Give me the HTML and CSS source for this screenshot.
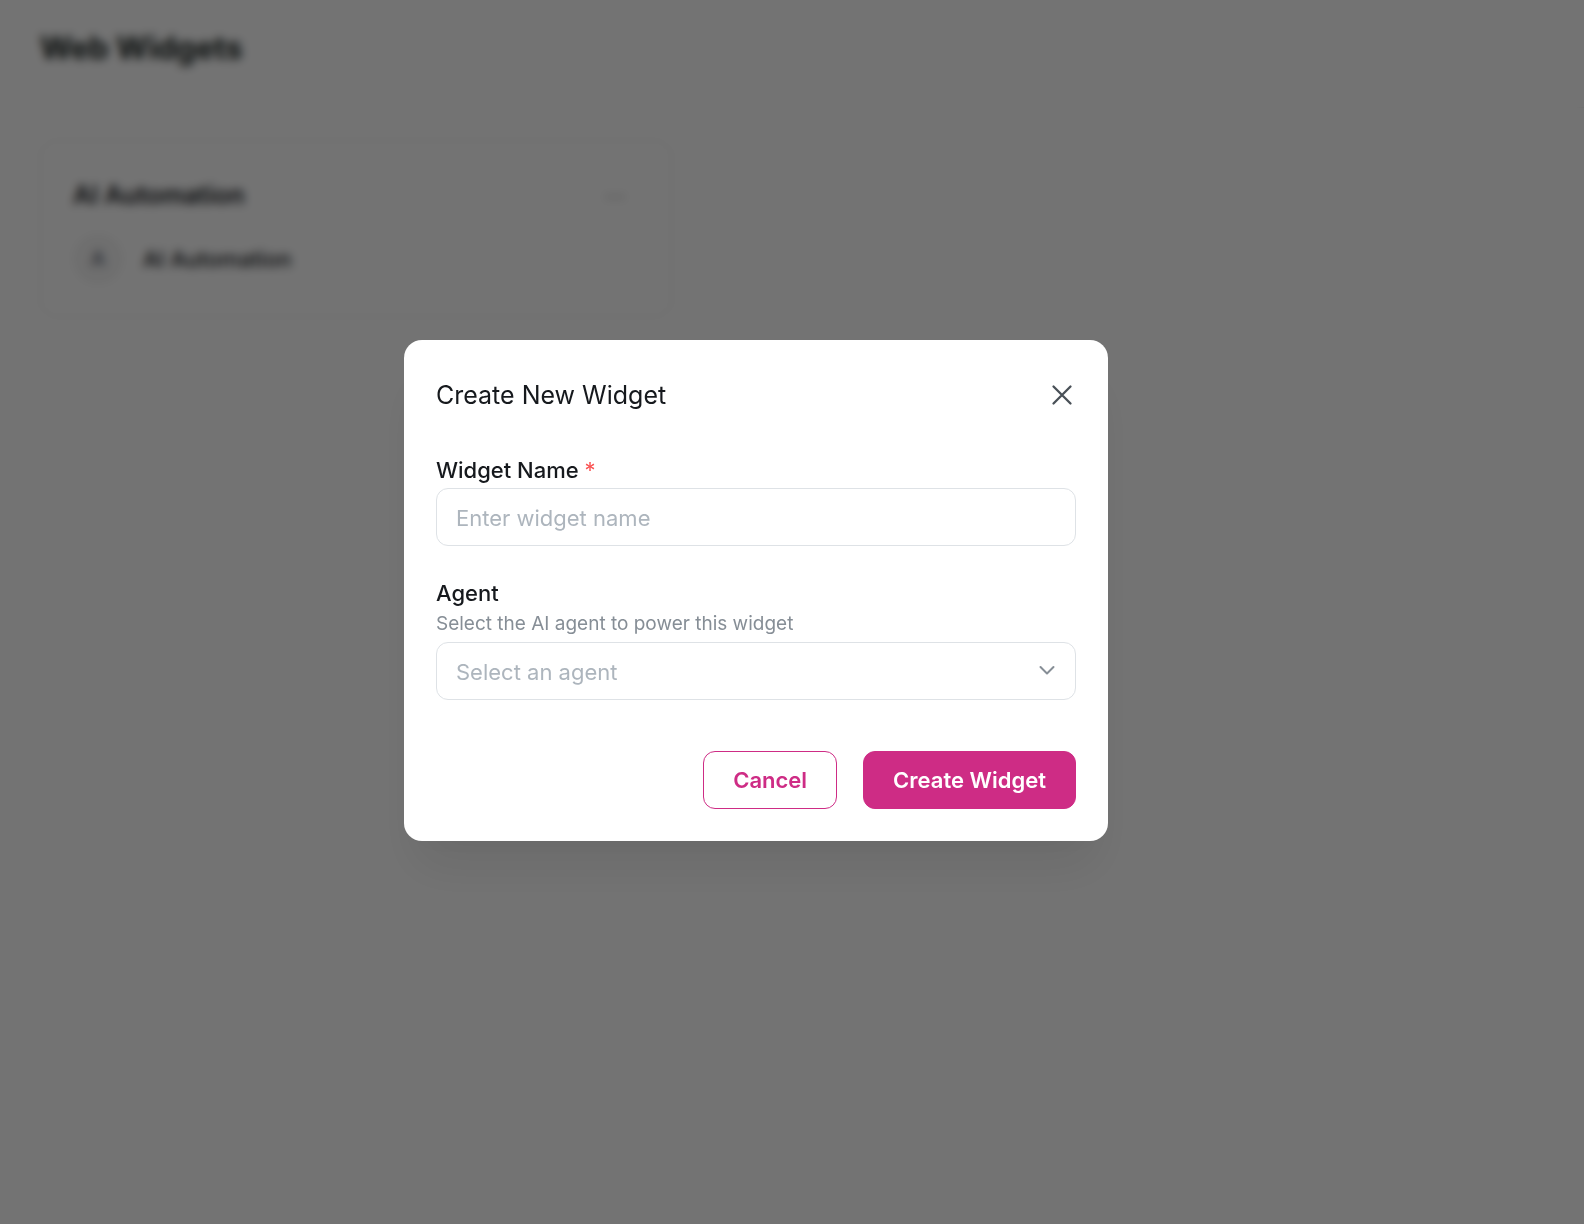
FILE: index.html
```html
<!DOCTYPE html>
<html lang="en">
  <head>
    <meta charset="UTF-8">
    <meta name="viewport" content="width=device-width, initial-scale=1">
    <title>Web Widgets</title>
    <link rel="stylesheet" href="styles.css">
  </head>
  <body>
    <div class="page">
      <header class="page-head">
        <h1>Web Widgets</h1>
      </header>
      <main class="cards">
        <section class="card">
          <div class="card-head">
            <h2>AI Automation</h2>
            <button class="more" type="button" aria-label="More">
              <svg width="24" height="24" viewBox="0 0 24 24"><circle cx="5" cy="14" r="2"/><circle cx="12" cy="14" r="2"/><circle cx="19" cy="14" r="2"/></svg>
            </button>
          </div>
          <div class="agent">
            <span class="avatar">A</span>
            <span class="agent-name">AI Automation</span>
          </div>
        </section>
      </main>
    </div>

    <div class="overlay">
      <form class="modal" role="dialog" aria-modal="true" aria-labelledby="modal-title">
        <div class="modal-head">
          <h2 id="modal-title">Create New Widget</h2>
          <button class="close" type="button" aria-label="Close">
            <svg width="28" height="28" viewBox="0 0 28 28"><path d="M5.5 5.5l17 17M22.500 5.500l-17 17"/></svg>
          </button>
        </div>

        <div class="field">
          <label for="name">Widget Name <span class="required">*</span></label>
          <input class="control" id="name" type="text" placeholder="Enter widget name">
        </div>

        <div class="field">
          <label for="agent">Agent</label>
          <p class="hint" id="agent-hint">Select the AI agent to power this widget</p>
          <div class="select">
            <select class="control" id="agent" aria-describedby="agent-hint">
              <option value="">Select an agent</option>
            </select>
            <svg class="chevron" width="18" height="18" viewBox="0 0 18 18"><path d="M2.500 6l6.500 6.500L15.500 6"/></svg>
          </div>
        </div>

        <div class="actions">
          <button class="btn" type="button">Cancel</button>
          <button class="btn btn-primary" type="submit">Create Widget</button>
        </div>
      </form>
    </div>
  </body>
</html>
```

FILE: styles.css
```css
* { box-sizing: border-box; }
body, h1, h2, p { margin: 0; }
body { background: #fff; color: #16191d; font: 22px/30px Inter, sans-serif; }
button, input, select { font: inherit; margin: 0; }
svg { display: block; }

/* page behind the dialog */
.page { min-height: 100vh; padding-left: 40px; }
.page-head { height: 108px; padding-top: 28px; border-bottom: 1px solid #eee; }
.page-head h1 { font-size: 31px; line-height: 40px; font-weight: 700; color: #16201c; }
.cards { display: grid; grid-template-columns: repeat(auto-fill, minmax(600px, 632px)); gap: 32px; padding-top: 32px; }
.card { border: 1px solid #e9e9e9; border-radius: 16px; padding: 32px; }
.card-head { display: flex; align-items: center; justify-content: space-between; height: 43px; margin-bottom: 18px; }
.card-head h2 { font-size: 25px; font-weight: 600; }
.more { padding: 0 12px; border: 0; background: none; fill: #bbb; }
.agent { display: flex; align-items: center; gap: 20px; }
.avatar { width: 50px; height: 50px; border-radius: 50%; background: #f5f5f5; color: #6b7280; font-size: 20px; line-height: 50px; text-align: center; font-weight: 600; }
.agent-name { font-weight: 500; }

/* dialog */
.overlay { position: fixed; top: 0; left: 0; right: 0; bottom: 0; display: flex; align-items: center; justify-content: center; padding: 0 72px 43px 0; background: rgba(0, 0, 0, 0.55); backdrop-filter: blur(5px); }
.modal { width: 704px; max-width: 100%; padding: 32px; background: #fff; border-radius: 18px; box-shadow: 0 36px 50px -10px rgba(0, 0, 0, 0.08), 0 16px 30px -10px rgba(0, 0, 0, 0.03); }
.modal-head { display: flex; align-items: center; justify-content: space-between; height: 46px; margin-bottom: 37px; }
.modal-head h2 { font-size: 25px; font-weight: 400; }
.close { padding: 0; border: 0; background: none; cursor: pointer; }
.close svg { fill: none; stroke: #495057; stroke-width: 2.3; stroke-linecap: round; }
.field { margin-bottom: 32px; }
.field label { display: block; font-weight: 500; }
.required { color: #fa5252; font-weight: 400; }
.hint { font-size: 19px; line-height: 31px; color: #868e96; }
.control { display: block; width: 100%; height: 58px; margin-top: 3px; padding: 2px 19px 0; border: 1px solid #dee2e6; border-radius: 12px; background: #fff; color: #adb5bd; appearance: none; }
.control::placeholder { color: #adb5bd; opacity: 1; }
.select { position: relative; }
.chevron { position: absolute; right: 20px; top: 19px; fill: none; stroke: #868e96; stroke-width: 2; stroke-linecap: round; stroke-linejoin: round; pointer-events: none; }
.actions { display: flex; justify-content: flex-end; gap: 26px; margin-top: 51px; }
.btn { height: 58px; padding: 0 29px; border: 1px solid #ce2c85; border-radius: 12px; background: #fff; color: #ce2c85; font-weight: 600; cursor: pointer; }
.btn-primary { background: #ce2c85; color: #fff; }
```
